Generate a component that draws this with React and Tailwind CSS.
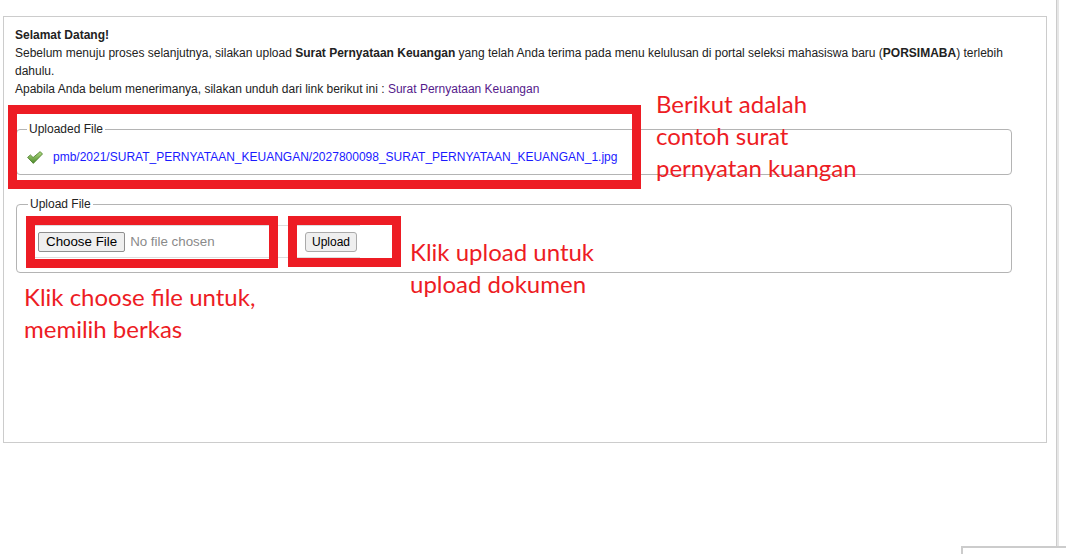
import React from "react";

function CheckIcon() {
  return (
    <svg width="16" height="13" viewBox="0 0 16 13" className="shrink-0">
      <defs>
        <linearGradient id="chk" x1="0" y1="0" x2="0" y2="1">
          <stop offset="0" stopColor="#b2dc84" />
          <stop offset="1" stopColor="#4c8a2a" />
        </linearGradient>
      </defs>
      <path
        d="M0.6 6.4 L3.4 3.9 L6.1 6.5 L13.2 0.6 L15.5 3 L6.3 12.4 Z"
        fill="url(#chk)"
        stroke="#477a27"
        strokeWidth="0.8"
        strokeLinejoin="round"
      />
    </svg>
  );
}

function RedBox({ className }) {
  return <div className={`absolute border-[9px] border-[#ed1c24] ${className}`} />;
}

function Note({ className, children }) {
  return (
    <p className={`absolute font-['Lato',sans-serif] text-[24px] leading-[32px] text-[#ed1c24] ${className}`}>
      {children}
    </p>
  );
}

export default function App() {
  return (
    <div className="relative h-[554px] overflow-hidden bg-white font-['Liberation_Sans',Arial,sans-serif] text-[12px] leading-[18px] text-[#222]">
      <div className="flex">
        <div className="w-[1056px] pl-[3px] pt-[16px]">
          <div className="h-[427px] w-[1044px] border border-[#ccc] pl-[11px] pt-[9px]">
            <div className="w-[997px]">
              <p className="font-bold">Selamat Datang!</p>
              <p>
                Sebelum menuju proses selanjutnya, silakan upload <b>Surat Pernyataan Keuangan</b> yang telah Anda
                terima pada menu kelulusan di portal seleksi mahasiswa baru (<b>PORSIMABA</b>) terlebih dahulu.
              </p>
              <p>
                Apabila Anda belum menerimanya, silakan unduh dari link berikut ini :{" "}
                <a className="text-[#551a8b]">Surat Pernyataan Keuangan</a>
              </p>

              <fieldset className="ml-[1px] mt-[24px] w-[996px] rounded-[4px] border border-[#b4b4b4] px-[10px] pb-[8px] pt-[12px]">
                <legend className="px-[2px] leading-[14px]">Uploaded File</legend>
                <div className="flex items-center gap-[10px]">
                  <CheckIcon />
                  <a className="text-[#1a1aff]">
                    pmb/2021/SURAT_PERNYATAAN_KEUANGAN/2027800098_SURAT_PERNYATAAN_KEUANGAN_1.jpg
                  </a>
                </div>
              </fieldset>

              <fieldset className="ml-[1px] mt-[22px] w-[996px] rounded-[4px] border border-[#b4b4b4] px-[11px] pb-[14px] pt-[14px]">
                <legend className="px-[2px] leading-[14px]">Upload File</legend>
                <div className="flex w-[332px] border-y border-[#ddd]">
                  <div className="flex h-[31px] w-[262px] items-center pl-[10px] text-[13.33px]">
                    <button className="h-[20px] rounded-[2px] border border-[#8f8f8f] bg-[#efefef] px-[7px] leading-[18px] text-black">
                      Choose File
                    </button>
                    <span className="ml-[5px] text-[#8a8a8a]">No file chosen</span>
                  </div>
                  <div className="flex h-[31px] items-center pl-[15px]">
                    <button className="h-[20px] rounded-[3px] border border-[#aaa] bg-[#efefef] px-[6px] leading-[18px] text-black">
                      Upload
                    </button>
                  </div>
                </div>
              </fieldset>
            </div>
          </div>
        </div>
        <div className="h-[546px] w-[3px] border-l border-[#ccc] bg-[#e6e6e6]" />
      </div>

      <RedBox className="left-[8px] top-[105px] h-[84px] w-[633px]" />
      <RedBox className="left-[26px] top-[216px] h-[52px] w-[252px]" />
      <RedBox className="left-[288px] top-[216px] h-[51px] w-[113px]" />

      <Note className="left-[656px] top-[88px]">
        Berikut adalah
        <br />
        contoh surat
        <br />
        pernyatan kuangan
      </Note>
      <Note className="left-[410px] top-[236px]">
        Klik upload untuk
        <br />
        upload dokumen
      </Note>
      <Note className="left-[24px] top-[281px] leading-[31px]">
        Klik choose file untuk,
        <br />
        memilih berkas
      </Note>

      <div className="absolute left-[961px] top-[546px] h-[40px] w-[140px] border-l-2 border-t-2 border-[#ccc] bg-white px-[6px] pt-[2px] text-[12px] text-[#1a1aff]">
        Kontak Kami
      </div>
    </div>
  );
}
